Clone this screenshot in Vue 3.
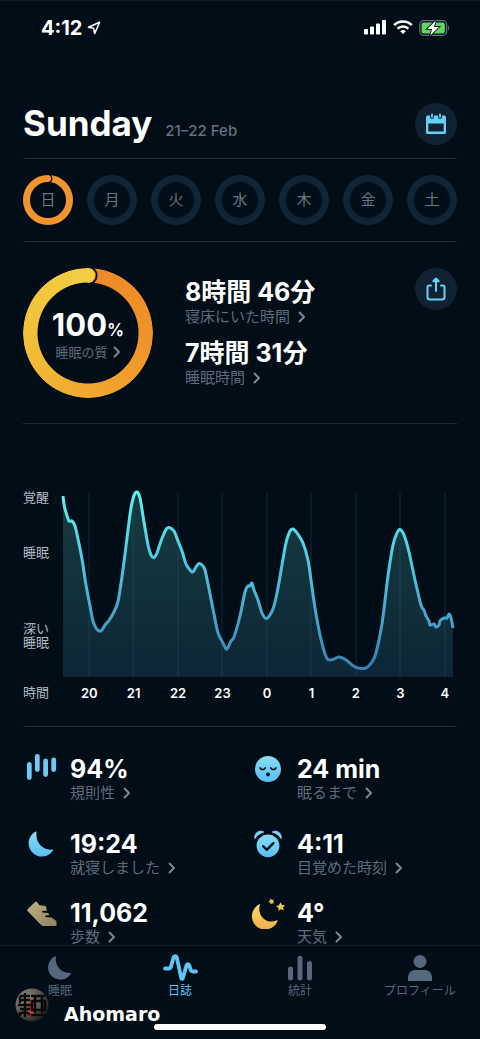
<script setup>
import { computed } from 'vue'

const days = ['日', '月', '火', '水', '木', '金', '土']
const hours = ['20', '21', '22', '23', '0', '1', '2', '3', '4']
const gridLines = [26, 70, 115, 159, 204, 248, 293, 337, 382]

const samples = [
  [0, 8], [1.5, 19], [3.5, 26], [6, 33], [9, 33], [12, 38], [15, 51], [19, 71], [23, 97], [27, 118],
  [30, 133], [33, 140], [36, 143], [39, 142], [42, 137], [47, 131], [54, 117], [57, 102], [61, 74],
  [65, 42], [68, 20], [71, 7.5], [74, 4], [77, 10], [81, 34], [85, 57], [88, 67], [91, 69.5], [94, 65],
  [98, 53], [103, 41.5], [106, 39.5], [111, 43], [115, 53], [119, 63], [123, 76], [127, 82], [130, 84],
  [133, 79], [136, 75.5], [139, 77], [142, 82], [146, 101], [151, 126], [155, 145], [160, 155],
  [162, 159], [164, 161], [168, 153], [171, 149], [177, 128], [182, 104], [185, 98], [187, 98],
  [189, 95], [191, 102], [195, 112], [199, 125], [203, 130.5], [207, 127], [211, 118], [215, 100],
  [219, 77], [223, 55], [227, 43], [230, 41], [234, 45], [240, 55], [245, 72], [248, 92], [252, 120],
  [257, 147], [262, 166], [265, 171.5], [270, 171.5], [276, 169], [283, 172], [289, 177], [295, 180],
  [303, 180], [309, 174], [313, 165], [319, 136], [325, 88], [330, 57], [334, 45], [337, 41.5],
  [341, 47], [346, 64], [352, 92], [358, 117], [361, 122], [363, 128], [366, 133], [367, 137],
  [371, 136], [373, 139], [376, 137], [377, 133], [381, 130], [384, 130], [386, 126], [388, 130],
  [390, 140],
]

const line = computed(() => {
  let d = `M${samples[0].join(' ')}`
  for (let i = 0; i < samples.length - 1; i++) {
    const a = samples[Math.max(i - 1, 0)]
    const b = samples[i]
    const c = samples[i + 1]
    const e = samples[Math.min(i + 2, samples.length - 1)]
    d += `C${b[0] + (c[0] - a[0]) / 6} ${b[1] + (c[1] - a[1]) / 6} ${c[0] - (e[0] - b[0]) / 6} ${c[1] - (e[1] - b[1]) / 6} ${c[0]} ${c[1]}`
  }
  return d
})
const area = computed(() => `${line.value}V189H0Z`)

const stats = [
  { icon: 'bars', value: '94%', label: '規則性' },
  { icon: 'face', value: '24 min', label: '眠るまで' },
  { icon: 'moon', value: '19:24', label: '就寝しました' },
  { icon: 'alarm', value: '4:11', label: '目覚めた時刻' },
  { icon: 'shoe', value: '11,062', label: '歩数' },
  { icon: 'night', value: '4°', label: '天気' },
]
const tabs = [
  { icon: 'sleep', label: '睡眠' },
  { icon: 'journal', label: '日誌', active: true },
  { icon: 'stats', label: '統計' },
  { icon: 'profile', label: 'プロフィール' },
]
</script>

<template>
  <div class="page">
    <svg class="defs" aria-hidden="true">
      <defs>
        <linearGradient id="sky" x1="0" y1="0" x2="0" y2="1">
          <stop offset="0" stop-color="#8adcf5" /><stop offset="1" stop-color="#58bff5" />
        </linearGradient>
        <linearGradient id="sand" x1="0" y1="0" x2="1" y2="1">
          <stop offset="0" stop-color="#c2b184" /><stop offset="1" stop-color="#8f8160" />
        </linearGradient>
        <linearGradient id="gold" x1="0" y1="0" x2="0" y2="1">
          <stop offset="0" stop-color="#f6d765" /><stop offset="1" stop-color="#f2b04c" />
        </linearGradient>
      </defs>
    </svg>

    <div class="status">
      <div class="clock">
        <span>4:12</span>
        <svg width="14" height="14" viewBox="0 0 14 14"><path d="M12.6 1.3 1.4 6.2l5.2 1.1 1.1 5.2z" fill="none" stroke="#fff" stroke-width="1.6" stroke-linejoin="round" /></svg>
      </div>
      <div class="signals">
        <svg width="23" height="15" viewBox="0 0 23 15" fill="#fff"><rect x="0" y="9" width="4" height="5.500" rx="1" /><rect x="6" y="6.500" width="4" height="8" rx="1" /><rect x="12" y="3.500" width="4" height="11" rx="1" /><rect x="18" y="0" width="4" height="14.500" rx="1" /></svg>
        <svg width="20" height="15" viewBox="0 0 20 15" fill="none" stroke="#fff" stroke-width="2.500"><path d="M1.200 5.200a12.500 12.500 0 0 1 17.600 0M4.600 8.700a7.700 7.700 0 0 1 10.800 0" /><path d="M10 14 7.200 11.300a4 4 0 0 1 5.600 0z" fill="#fff" stroke="none" /></svg>
        <svg width="31" height="16" viewBox="0 0 31 16"><rect x=".7" y=".7" width="27" height="14.600" rx="4" fill="none" stroke="#66727c" stroke-width="1.200" /><rect x="2.500" y="2.500" width="23.400" height="11" rx="2.300" fill="#61d65f" /><path d="M29.200 5.500c1.300.5 1.300 4.500 0 5z" fill="#66727c" /><path d="M16.800.6 8.300 8.900h4.800L11.200 15.400l8.700-8.500h-5z" fill="#fff" stroke="#010d17" stroke-width="1.800" paint-order="stroke" /></svg>
      </div>
    </div>

    <main class="content">
      <header class="heading">
        <h1>Sunday</h1>
        <span class="range">21–22 Feb</span>
        <button class="round" type="button" aria-label="カレンダー">
          <svg width="22" height="22" viewBox="0 0 22 22"><path d="M2.500 2.500H5V4a2 2 0 0 0 4 0V2.500h4V4a2 2 0 0 0 4 0V2.500h2.500A1.500 1.500 0 0 1 21 4v15.500a1.500 1.500 0 0 1-1.500 1.500h-17A1.500 1.500 0 0 1 1 19.500V4a1.500 1.500 0 0 1 1.500-1.500zM3.300 10.500v8h15.400v-8z" fill="#66cffa" fill-rule="evenodd" /><path d="M7 1.300V4M15 1.300V4" stroke="#66cffa" stroke-width="1.800" stroke-linecap="round" /></svg>
        </button>
      </header>

      <nav class="week" aria-label="曜日">
        <button v-for="(day, i) in days" :key="day" type="button" class="day" :class="{ current: i === 0 }">
          <svg v-if="i === 0" class="cap" viewBox="0 0 50 50" aria-hidden="true"><path d="M25.500-.5A4.200 4.200 0 0 1 25.500 7.700" fill="none" stroke="#010d17" stroke-width="1.200" /></svg>
          {{ day }}
        </button>
      </nav>

      <section class="quality">
        <div class="gauge">
          <div class="gauge-ring"></div>
          <svg class="cap" viewBox="0 0 130 130" aria-hidden="true"><path d="M64.500 0a7.500 7.500 0 0 1 0 15z" fill="#f2ce42" /><path d="M65-1.200a8.600 8.600 0 0 1 0 17.400" fill="none" stroke="#010d17" stroke-width="1.800" /></svg>
          <p class="score">100<small>%</small></p>
          <a class="link small" href="#">睡眠の質<svg class="chevron" viewBox="0 0 8 12"><path d="m1.500 1.500 4.500 4.500-4.500 4.500" /></svg></a>
        </div>
        <div class="times">
          <p class="duration">8時間 46分</p>
          <a class="link" href="#">寝床にいた時間<svg class="chevron" viewBox="0 0 8 12"><path d="m1.500 1.500 4.500 4.500-4.500 4.500" /></svg></a>
          <p class="duration second">7時間 31分</p>
          <a class="link" href="#">睡眠時間<svg class="chevron" viewBox="0 0 8 12"><path d="m1.500 1.500 4.500 4.500-4.500 4.500" /></svg></a>
        </div>
        <button class="round" type="button" aria-label="共有">
          <svg width="20" height="24" viewBox="0 0 20 24" fill="none" stroke="#66cffa" stroke-width="2" stroke-linecap="round" stroke-linejoin="round"><path d="M5 8.500H3.500A2 2 0 0 0 1.500 10.500V20a2.500 2.500 0 0 0 2.500 2.500h12a2.500 2.500 0 0 0 2.500-2.500V10.500a2 2 0 0 0-2-2H15M10 14V3" /><path d="M7.300 4.300 10 1.500l2.700 2.800z" fill="#66cffa" /></svg>
        </button>
      </section>

      <section class="chart">
        <div class="levels">
          <span>覚醒</span>
          <span>睡眠</span>
          <span class="deep">深い<br />睡眠</span>
        </div>
        <svg class="plot" viewBox="0 0 394 190" preserveAspectRatio="none" role="img" aria-label="睡眠グラフ">
          <defs>
            <linearGradient id="trace" gradientUnits="userSpaceOnUse" x1="0" y1="4" x2="0" y2="182">
              <stop offset="0" stop-color="#62f2f0" /><stop offset=".35" stop-color="#50cde2" /><stop offset=".75" stop-color="#459fca" /><stop offset="1" stop-color="#377fae" />
            </linearGradient>
            <linearGradient id="fill" gradientUnits="userSpaceOnUse" x1="0" y1="4" x2="0" y2="190">
              <stop offset="0" stop-color="#173b40" /><stop offset="1" stop-color="#0c2635" />
            </linearGradient>
          </defs>
          <path :d="area" fill="url(#fill)" />
          <path v-for="x in gridLines" :key="x" :d="`M${x} 5V189`" stroke="#28607a" stroke-opacity=".36" />
          <path :d="line" fill="none" stroke="url(#trace)" stroke-width="3" stroke-linejoin="round" vector-effect="non-scaling-stroke" />
        </svg>
        <span class="axis-name">時間</span>
        <div class="hours"><span v-for="h in hours" :key="h">{{ h }}</span></div>
      </section>

      <section class="stats">
        <div v-for="s in stats" :key="s.label" class="stat">
          <svg class="glyph" viewBox="0 0 36 32" aria-hidden="true">
            <g v-if="s.icon === 'bars'" stroke="#6ccaf4" stroke-width="4.800" stroke-linecap="round"><path d="M6.300 11.500v13" /><path d="M14.300 3.500v13" /><path d="M22.600 8v13.500" /><path d="M30.700 7v9.500" /></g>
            <g v-else-if="s.icon === 'face'"><circle cx="18" cy="16" r="13" fill="url(#sky)" /><path d="M10 15c1 2.200 4.200 2.200 5.200 0M20.800 15c1 2.200 4.200 2.200 5.200 0" fill="none" stroke="#010d17" stroke-width="1.700" stroke-linecap="round" /><circle cx="18" cy="21.500" r="1.900" fill="#010d17" /></g>
            <path v-else-if="s.icon === 'moon'" d="M12.500 3.600a.7.700 0 0 1 1 .8C12.300 14.500 19.500 22.700 29.300 21.600a.7.700 0 0 1 .7 1A13.300 13.300 0 1 1 12.500 3.600z" fill="url(#sky)" />
            <g v-else-if="s.icon === 'alarm'"><circle cx="18" cy="17.800" r="11.400" fill="url(#sky)" /><path d="M4.900 10.600C3.900 5 9.300 1.400 13.700 4 9.500 5.400 6.700 7.600 4.900 10.600zM31.100 10.600C32.100 5 26.700 1.400 22.300 4c4.200 1.400 7 3.600 8.800 6.600z" fill="#80d6f5" stroke="#80d6f5" stroke-linejoin="round" /><path d="m13.200 18.300 3.500 3.600 6.700-6.800" fill="none" stroke="#010d17" stroke-width="2.300" stroke-linecap="round" stroke-linejoin="round" /></g>
            <path v-else-if="s.icon === 'shoe'" d="M4.600 12.200 12 4.900q1-.9 2 0l2.500 3.400 5 .4q1.300.1 1.600 1.300l.8 3.700-4.800.2v1.600l6.300.4.800 2.400-3.900.3v1.500l6.200.5 4 2.600q1.300 1 1.200 3.700 0 2.200-1.300 2.200H20.600q-1.600 0-2.600-1L4.600 14q-1-.9 0-1.800z" fill="url(#sand)" />
            <g v-else fill="url(#gold)" transform="translate(0 1)"><path d="M10 6.600C6.500 17.500 17 27.300 27 22.200a.5.500 0 0 1 .6.700A13.300 13.300 0 1 1 9.600 6.100a.4.400 0 0 1 .4.500z" /><path d="m20.500.3 1.400 1.600 2-.1-.7 1.800.8 1.900-2-.3-1.500 1.400-.4-2L18.300 3.500l1.800-1z" /><path d="m30.500 4.300 1.500 2.600 3 .2-2 2.300.8 3-2.900-1.100-2.500 1.700.1-3-2.500-1.900 3-.8z" /></g>
          </svg>
          <div>
            <p class="value">{{ s.value }}</p>
            <a class="link" href="#">{{ s.label }}<svg class="chevron" viewBox="0 0 8 12"><path d="m1.500 1.500 4.500 4.500-4.500 4.500" /></svg></a>
          </div>
        </div>
      </section>
    </main>

    <footer class="bottom">
      <nav class="tabs">
        <a v-for="t in tabs" :key="t.label" href="#" class="tab" :class="{ active: t.active }">
          <svg width="36" height="28" viewBox="0 0 36 28" aria-hidden="true">
            <path v-if="t.icon === 'sleep'" d="M13 2.300a.6.600 0 0 1 .9.700C12.500 12 19.500 19.800 28.300 18.800a.6.600 0 0 1 .6.900A12.300 12.300 0 1 1 13 2.300z" fill="currentColor" />
            <path v-else-if="t.icon === 'journal'" d="M3 14.500h3.800c1.500 0 1.900-1 2.400-2.600l2.100-7.600c.8-2.900 3-2.900 3.700 0l4.100 19c.4 2.200 1.500 2.200 2 0l3.300-11.600c.7-2.200 2.300-2.200 3 0l1.200 3.800c.5 1.600 1 2 2.400 2H34" fill="none" stroke="currentColor" stroke-width="3.800" stroke-linecap="round" stroke-linejoin="round" />
            <path v-else-if="t.icon === 'stats'" d="M8.500 15v9M18 4.200V24M27.500 9.500V24" stroke="currentColor" stroke-width="5" stroke-linecap="round" />
            <g v-else fill="currentColor"><circle cx="18" cy="7.500" r="6.500" /><path d="M6 26.500V23a7 7 0 0 1 7-7h10a7 7 0 0 1 7 7v3.500q0 .5-.5.500h-23q-.5 0-.5-.5z" /></g>
          </svg>
          <span>{{ t.label }}</span>
        </a>
      </nav>
      <div class="author">
        <svg width="36" height="36" viewBox="0 0 36 36" aria-hidden="true">
          <defs><radialGradient id="stone" cx=".3" cy=".3" r=".8"><stop offset="0" stop-color="#8b8a87" /><stop offset=".6" stop-color="#555554" /><stop offset="1" stop-color="#171b1f" /></radialGradient></defs>
          <circle cx="18" cy="18" r="16.500" fill="url(#stone)" />
          <path d="M14 16 19 12l2 14-6 4z" fill="#d52f42" />
          <path d="M6 9h10M6 9v7M11 6v11M5 13h11M4 18h13M11 18v12M6 22h10M5 28q6-6 11 0M6 25v4" fill="none" stroke="#080808" stroke-width="2.300" />
          <path d="M17 9h14M21 9v5h7V9M18 14v9h13v-9zM21 14v12M28 14v12M17 28h15" fill="none" stroke="#080808" stroke-width="2.500" />
        </svg>
        <span>Ahomaro</span>
      </div>
      <div class="home"></div>
    </footer>
  </div>
</template>

<style>
html, body { background: #010d17; }
</style>

<style scoped>
* { box-sizing: border-box; }
p, h1 { margin: 0; }
button { border: 0; padding: 0; font: inherit; color: inherit; cursor: pointer; }
a { text-decoration: none; color: inherit; }
svg { display: block; flex: none; }

.page {
  min-height: 100vh;
  display: flex;
  flex-direction: column;
  background: #010d17;
  color: #fff;
  font-family: Inter, "Noto Sans CJK JP", sans-serif;
  border-top: 1px solid #0d1c26;
}
.defs { position: absolute; width: 0; height: 0; }

.status {
  height: 53px;
  padding: 0 30px 0 41px;
  display: flex;
  align-items: center;
  justify-content: space-between;
}
.clock { display: flex; align-items: center; gap: 5px; font-size: 20px; line-height: 20px; font-weight: 700; }
.signals { display: flex; align-items: center; gap: 6px; }

.content { flex: 1; padding: 0 23px; }
.heading, .week, .quality, .chart { border-bottom: 1px solid #192c39; }

.heading { display: flex; align-items: baseline; padding: 48px 0 13px; }
h1 { font-size: 35px; line-height: 43px; font-weight: 700; }
.range { margin-left: 13px; font-size: 15px; font-weight: 500; color: #64727f; }
.round {
  width: 42px;
  height: 42px;
  border-radius: 50%;
  background: #102231;
  display: grid;
  place-items: center;
  margin-left: auto;
  align-self: flex-start;
}
.heading .round { align-self: flex-end; }

.week { display: flex; justify-content: space-between; padding: 16px 0; }
.day {
  position: relative;
  width: 50px;
  height: 50px;
  padding-bottom: 3px;
  border: 7px solid #122534;
  border-radius: 50%;
  background: none;
  font-size: 15px;
  color: #6a7884;
}
.day.current { border-color: #f2932d; }
.cap { position: absolute; inset: 0; width: 100%; height: 100%; overflow: visible; }
.day .cap { inset: -7px; width: 50px; height: 50px; }

.quality { display: flex; padding: 26px 0 25px; }
.gauge {
  position: relative;
  width: 130px;
  height: 130px;
  display: flex;
  flex-direction: column;
  align-items: center;
  padding-top: 40px;
}
.gauge-ring {
  position: absolute;
  inset: 0;
  border-radius: 50%;
  background: conic-gradient(#ee8827, #f0952a 30%, #f0a92e 50%, #f2c039 75%, #f2ce42);
  mask: radial-gradient(closest-side, transparent 50px, #000 51px);
}
.score { font-size: 31px; line-height: 33px; font-weight: 700; margin-bottom: 4px; }
.score small { font-size: 17px; line-height: 17px; font-weight: 600; }
.link { display: flex; align-items: center; font-size: 15px; line-height: 18px; font-weight: 400; color: #5d6c79; }
.link.small { font-size: 13px; line-height: 14px; }
.chevron { width: 8px; height: 12px; margin-left: 8px; fill: none; stroke: #7a8995; stroke-width: 2; stroke-linecap: round; stroke-linejoin: round; }
.link.small .chevron { margin-left: 5px; }
.times { margin-left: 32px; padding-top: 10px; }
.duration { font-size: 25px; line-height: 28px; font-weight: 700; margin-bottom: 2px; }
.duration.second { margin-top: 13px; }

.chart { display: grid; grid-template-columns: 40px 1fr; padding: 64px 0 18px; }
.levels { display: flex; flex-direction: column; font-size: 13px; line-height: 14px; color: #b4bbc1; padding-top: 2px; }
.levels span + span { margin-top: 41px; }
.levels span + .deep { margin-top: 62px; }
.plot { width: 100%; height: 190px; overflow: visible; }
.axis-name { font-size: 13px; line-height: 28px; color: #b4bbc1; }
.hours {
  display: grid;
  grid-template-columns: repeat(9, 1fr);
  margin: 0 -10px 0 4px;
  text-align: center;
  font-size: 13px;
  line-height: 30px;
  font-weight: 600;
}

.stats { display: grid; grid-template-columns: 227fr 207fr; grid-template-rows: 75px 69px 44px; padding-top: 30px; }
.stat { display: flex; gap: 11px; }
.glyph { width: 36px; height: 32px; margin-top: -4px; }
.value { font-size: 25px; line-height: 24px; font-weight: 700; margin-bottom: 3px; }

.bottom { position: relative; height: 94px; background: #010d17; border-top: 1px solid #0f1e29; }
.tabs { display: grid; grid-template-columns: repeat(4, 1fr); padding-top: 8px; }
.tab { display: flex; flex-direction: column; align-items: center; font-size: 12px; line-height: 18px; color: #56687d; }
.tab.active { color: #5fc5f7; }
.author {
  position: absolute;
  left: 14px;
  bottom: 15px;
  display: flex;
  align-items: center;
  gap: 14px;
  font-family: "DejaVu Sans", sans-serif;
  font-size: 19px;
  font-weight: 700;
}
.author span { margin-top: 18px; line-height: 20px; }
.home { position: absolute; left: 32%; right: 32%; bottom: 9px; height: 6px; border-radius: 3px; background: #fff; }
</style>
